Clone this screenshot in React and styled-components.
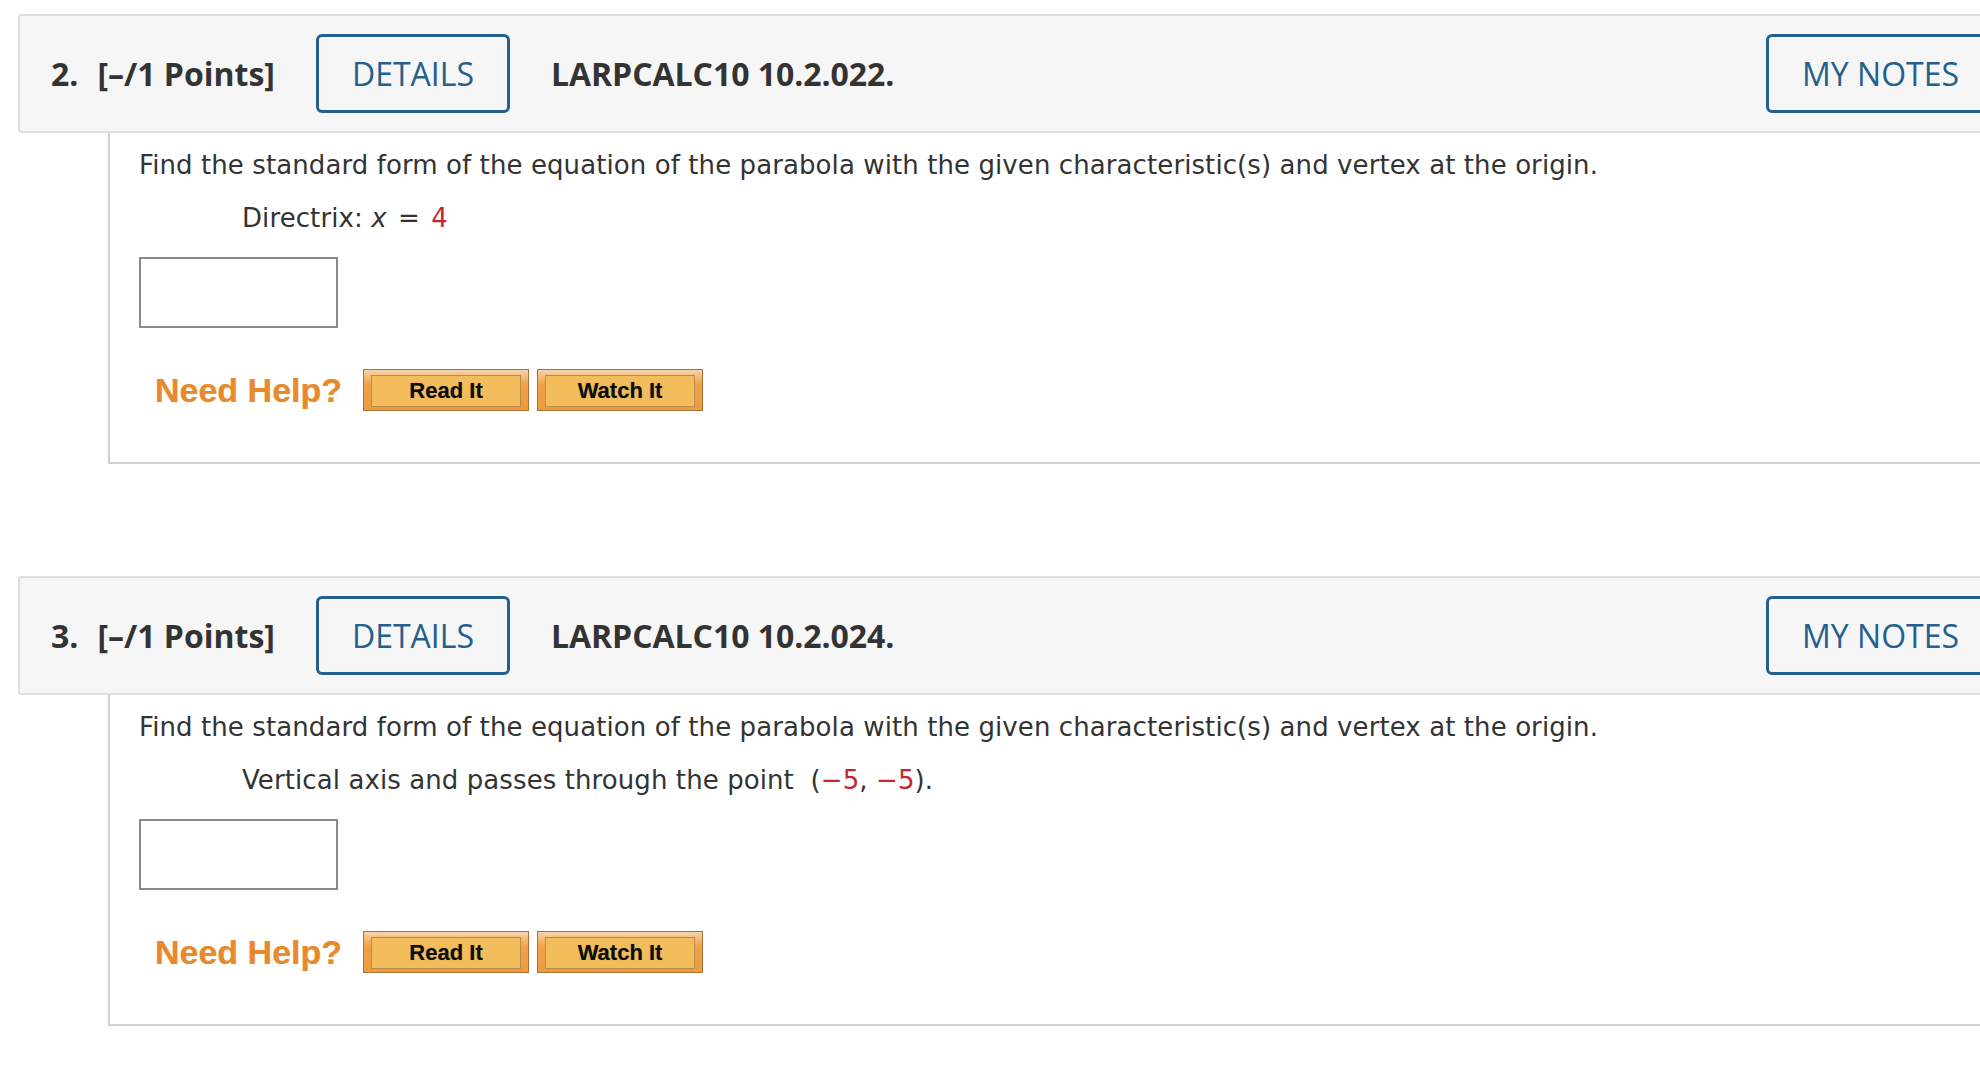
import React from 'react'
import styled, { createGlobalStyle } from 'styled-components'

const GlobalStyle = createGlobalStyle`
  html, body {
    margin: 0;
    padding: 0;
    background: #ffffff;
    overflow: hidden;
  }
`;

const Page = styled.div`
  width: 2040px;
  padding: 14px 0 0 18px;
  box-sizing: border-box;
`;

const Question = styled.section`
  margin-bottom: 112px;
`;

const Header = styled.div`
  display: flex;
  align-items: center;
  gap: 41px;
  height: 115px;
  padding: 0 45px 0 31px;
  background: #f6f6f6;
  border: 2px solid #dedede;
  border-right: none;
  border-radius: 3px 0 0 3px;
  font-family: "Open Sans", "DejaVu Sans", sans-serif;
  color: #333333;
`;

const Title = styled.div`
  display: flex;
  align-items: center;
  gap: 19px;
  font-size: 32px;
  font-weight: 700;
`;

const Code = styled.span`
  font-size: 32px;
  font-weight: 700;
  letter-spacing: -0.05px;
`;

const OutlineButton = styled.button`
  height: 79px;
  padding: 0 33px;
  margin-left: ${p => (p.$push ? 'auto' : '0')};
  background: transparent;
  border: 3px solid #245f8e;
  border-radius: 6px;
  color: #245f8e;
  font-family: "Open Sans", "DejaVu Sans", sans-serif;
  font-size: 32px;
  font-weight: 400;
  white-space: nowrap;
`;

const Body = styled.div`
  margin-left: 90px;
  padding: 17px 0 51px 29px;
  border-left: 2px solid #cfcfcf;
  border-bottom: 2px solid #cfcfcf;
  font-family: "DejaVu Sans", Verdana, sans-serif;
  font-size: 26px;
  letter-spacing: 0.09px;
  color: #333333;
`;

const Prompt = styled.p`
  margin: 0;
  line-height: 30px;
`;

const Given = styled.p`
  margin: 23px 0 0 103px;
  line-height: 30px;
  white-space: pre;
`;

const Red = styled.span`
  color: #c6262c;
`;

const Var = styled.i`
  font-style: italic;
`;

const Op = styled.span`
  margin: 0 3px;
`;

const Answer = styled.input`
  display: block;
  width: 199px;
  height: 71px;
  margin-top: 24px;
  box-sizing: border-box;
  border: 2px solid #8a8a8a;
  background: #ffffff;
`;

const HelpRow = styled.div`
  display: flex;
  align-items: center;
  margin: 41px 0 0 16px;
  height: 42px;
`;

const HelpLabel = styled.span`
  font-family: "Liberation Sans", Arial, sans-serif;
  font-size: 34px;
  font-weight: 700;
  letter-spacing: 0;
  color: #e8892c;
  margin-right: 21px;
  text-shadow: 0 0 1px rgba(232, 137, 44, 0.5);
`;

const HelpButton = styled.button`
  width: 166px;
  height: 42px;
  margin-right: 8px;
  padding: 5px 7px 3px 7px;
  box-sizing: border-box;
  border: 1px solid #a9743a;
  background: linear-gradient(#f7d3ac 0%, #efa24a 35%, #ee9a3e 100%);
  display: flex;
`;

const HelpInner = styled.span`
  flex: 1;
  display: flex;
  align-items: center;
  justify-content: center;
  border: 1px solid #b98a4c;
  background: #f3bd5b;
  font-family: "Liberation Sans", Arial, sans-serif;
  font-size: 22px;
  font-weight: 700;
  color: #0c0c0c;
  text-shadow: 0 0 1px rgba(0, 0, 0, 0.35);
`;

const questions = [
  {
    num: '2.',
    code: 'LARPCALC10 10.2.022.',
    given: (
      <>
        Directrix: <Var>x</Var><Op> = </Op><Red>4</Red>
      </>
    ),
  },
  {
    num: '3.',
    code: 'LARPCALC10 10.2.024.',
    given: (
      <>
        Vertical axis and passes through the point  (<Red>−5</Red>, <Red>−5</Red>).
      </>
    ),
  },
];

const App = () => {
  return (
    <Page>
      <GlobalStyle />
      {questions.map(q => (
        <Question key={q.code}>
          <Header>
            <Title>
              <span>{q.num}</span>
              <span>[–/1 Points]</span>
            </Title>
            <OutlineButton>DETAILS</OutlineButton>
            <Code>{q.code}</Code>
            <OutlineButton $push>MY NOTES</OutlineButton>
          </Header>
          <Body>
            <Prompt>
              Find the standard form of the equation of the parabola with the given characteristic(s) and vertex at the origin.
            </Prompt>
            <Given>{q.given}</Given>
            <Answer type="text" />
            <HelpRow>
              <HelpLabel>Need Help?</HelpLabel>
              <HelpButton><HelpInner>Read It</HelpInner></HelpButton>
              <HelpButton><HelpInner>Watch It</HelpInner></HelpButton>
            </HelpRow>
          </Body>
        </Question>
      ))}
    </Page>
  )
}

export default App
